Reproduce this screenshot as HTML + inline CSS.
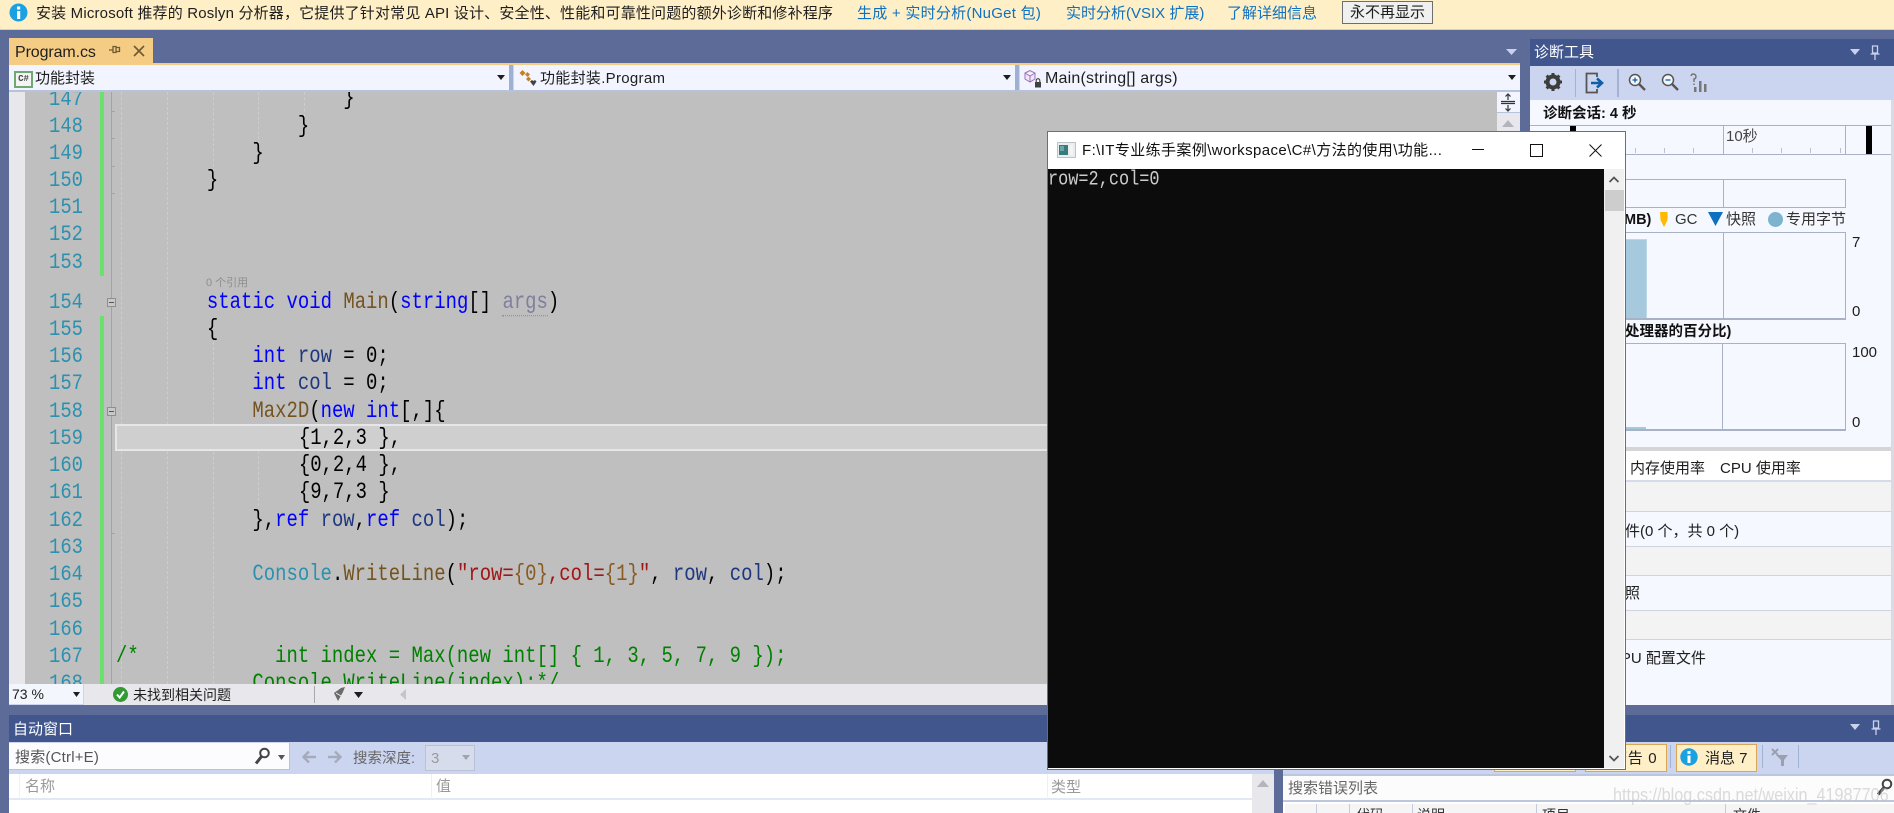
<!DOCTYPE html>
<html lang="zh">
<head>
<meta charset="utf-8">
<title>Visual Studio</title>
<style>
html,body{margin:0;padding:0;width:1894px;height:813px;overflow:hidden;background:#5d6b99}
body{position:relative;font-family:"Liberation Sans","Noto Sans CJK SC",sans-serif;font-size:15px;color:#1e1e1e}
.a{position:absolute;white-space:nowrap}
.t{position:absolute;white-space:nowrap;line-height:20px}
.code{position:absolute;white-space:pre;font-family:"Liberation Mono",monospace;font-size:18.94px;line-height:27.2px;height:27.2px;left:116px;color:#000;transform:scaleY(1.2);transform-origin:0 50%}
.n{position:absolute;left:40px;width:43px;text-align:right;font-family:"Liberation Mono",monospace;font-size:18.87px;line-height:27.2px;color:#2b91af;transform:scaleY(1.2)}
.k{color:#0000ff}.m{color:#74531f}.c{color:#2b91af}.v{color:#1f377f}.s{color:#a31515}.g{color:#008000}.f{color:#8a5a20}
.u{color:#7f7f9f;border-bottom:1px dotted #8f8fa8}
.guide{position:absolute;width:0;border-left:1px dashed #cdcdcd}
.b{position:absolute}
.lk{color:#0e70c0}
.tick{position:absolute;width:1px;height:5px;background:#b8c0cf;top:148px}
</style>
</head>
<body>

<!-- top info bar -->
<div class="b" style="left:0;top:0;width:1894px;height:29px;background:#ffefc6"></div>
<div class="b" style="left:0;top:29px;width:1894px;height:1px;background:#c8d2ea"></div>
<svg class="b" style="left:9px;top:3px" width="19" height="19" viewBox="0 0 19 19"><circle cx="9.5" cy="9.5" r="9" fill="#1ba1e2"/><rect x="8" y="8" width="3.2" height="8" fill="#fff"/><rect x="8" y="3.5" width="3.2" height="3" fill="#fff"/></svg>
<div class="t" style="left:36px;top:4px;font-size:15px;letter-spacing:.17px">安装 Microsoft 推荐的 Roslyn 分析器，它提供了针对常见 API 设计、安全性、性能和可靠性问题的额外诊断和修补程序</div>
<div class="t lk" style="left:857px;top:4px;letter-spacing:.25px">生成 + 实时分析(NuGet 包)</div>
<div class="t lk" style="left:1066px;top:4px">实时分析(VSIX 扩展)</div>
<div class="t lk" style="left:1227px;top:4px">了解详细信息</div>
<div class="b" style="left:1342px;top:1px;width:89px;height:21px;border:1px solid #6e6e6e;background:#f0f0f0;text-align:center;line-height:21px;font-size:15px">永不再显示</div>

<!-- tab -->
<div class="b" style="left:9px;top:38px;width:144px;height:26px;background:#f5cc84"></div>
<div class="t" style="left:15px;top:43px;font-size:16px;letter-spacing:-.1px">Program.cs</div>
<svg class="b" style="left:109px;top:44px" width="12" height="12" viewBox="0 0 12 12"><path d="M0 6H4M4 2.5H7V8.5H4ZM7 3.500H10.500V7.500H7" fill="none" stroke="#6d5a33" stroke-width="1.3"/></svg>
<svg class="b" style="left:133px;top:45px" width="12" height="12" viewBox="0 0 12 12"><path d="M1 1L11 11M11 1L1 11" stroke="#6d5a33" stroke-width="1.6"/></svg>
<div class="b" style="left:9px;top:63px;width:1511px;height:2px;background:#f5cc84"></div>
<svg class="b" style="left:1506px;top:49px" width="12" height="7"><path d="M0 0H11L5.500 6Z" fill="#c9d2ea"/></svg>

<!-- nav bar -->
<div class="b" style="left:9px;top:65px;width:1511px;height:27px;background:#ccd5f0"></div>
<div class="b" style="left:9px;top:65px;width:500px;height:25px;background:#f2f5ff"></div>
<div class="b" style="left:514px;top:65px;width:501px;height:25px;background:#f2f5ff"></div>
<div class="b" style="left:1020px;top:65px;width:500px;height:25px;background:#f2f5ff"></div>
<div class="b" style="left:9px;top:90px;width:1511px;height:2px;background:#b6c2de"></div>
<div class="b" style="left:509px;top:65px;width:4px;height:25px;background:#9fb0d5"></div>
<div class="b" style="left:1015px;top:65px;width:4px;height:25px;background:#9fb0d5"></div>
<div class="b" style="left:14px;top:71px;width:15px;height:13px;border:2px solid #6fa870;background:#f4f4f4;font:bold 9px/13px 'Liberation Mono',monospace;text-align:center;color:#444">C#</div>
<div class="t" style="left:35px;top:69px">功能封装</div>
<svg class="b" style="left:497px;top:75px" width="8" height="5"><path d="M0 0H8L4 5Z" fill="#1e1e1e"/></svg>
<svg class="b" style="left:519px;top:69px" width="18" height="19" viewBox="0 0 18 19"><path d="M0.500 4L3.500 1L6.500 4L3.500 7ZM6 5.500L8.500 3L11 5.500L8.500 8ZM4 7L5.500 5.500M7 10L9.500 7.500L12 10L9.500 12.500Z" fill="#c8801e"/><path d="M11 12.500L13 11L14.500 12L16 11L17.500 12.500L14.500 17Z" fill="#424242"/></svg>
<div class="t" style="left:540px;top:69px;letter-spacing:.3px">功能封装.Program</div>
<svg class="b" style="left:1003px;top:75px" width="8" height="5"><path d="M0 0H8L4 5Z" fill="#1e1e1e"/></svg>
<svg class="b" style="left:1024px;top:69px" width="18" height="20" viewBox="0 0 18 20"><path d="M1 4L6 1.500L11 4V10L6 13L1 10ZM1 4L6 7L11 4M6 7V13" fill="#efe6f6" stroke="#9a72b8" stroke-width="1"/><rect x="11" y="13" width="6" height="5.500" fill="#424242"/><path d="M12.200 13V11.500A1.800 1.800 0 0 1 15.800 11.500V13" fill="none" stroke="#424242" stroke-width="1.100"/></svg>
<div class="t" style="left:1045px;top:69px;font-size:16px;letter-spacing:.2px">Main(string[] args)</div>
<svg class="b" style="left:1508px;top:75px" width="8" height="5"><path d="M0 0H8L4 5Z" fill="#1e1e1e"/></svg>

<!-- editor -->
<div class="b" style="left:9px;top:92px;width:16px;height:592px;background:#e8e8ec"></div>
<div class="b" style="left:25px;top:92px;width:1472px;height:592px;background:#bfbfbf;overflow:hidden" id="ed"></div>
<div class="b" style="left:100px;top:92px;width:4px;height:184px;background:#6ce06c"></div>
<div class="b" style="left:100px;top:316px;width:4px;height:368px;background:#6ce06c"></div>
<div class="b" style="left:111px;top:92px;width:1px;height:592px;background:#a3a3a3"></div>
<div class="b" style="left:111px;top:111px;width:4px;height:1px;background:#a3a3a3"></div>
<div class="b" style="left:111px;top:138px;width:4px;height:1px;background:#a3a3a3"></div>
<div class="b" style="left:111px;top:166px;width:4px;height:1px;background:#a3a3a3"></div>
<div class="b" style="left:111px;top:193px;width:4px;height:1px;background:#a3a3a3"></div>
<div class="b" style="left:111px;top:533px;width:4px;height:1px;background:#a3a3a3"></div>
<div class="guide" style="left:121px;top:92px;height:592px"></div>
<div class="guide" style="left:167px;top:92px;height:592px"></div>
<div class="guide" style="left:213px;top:92px;height:80px"></div>
<div class="guide" style="left:213px;top:342px;height:342px"></div>
<div class="guide" style="left:258px;top:92px;height:52px"></div>
<div class="guide" style="left:258px;top:451px;height:55px"></div>
<div class="guide" style="left:304px;top:92px;height:25px"></div>
<div class="b" style="left:107px;top:298px;width:7px;height:7px;border:1px solid #8e8e8e;background:#c8c8c8"></div>
<div class="b" style="left:107px;top:407px;width:7px;height:7px;border:1px solid #8e8e8e;background:#c8c8c8"></div>
<div class="b" style="left:109px;top:302px;width:5px;height:1px;background:#555"></div>
<div class="b" style="left:109px;top:411px;width:5px;height:1px;background:#555"></div>
<div class="b" style="left:115px;top:424px;width:1382px;height:23px;background:#cfcfcf;border:2px solid #e6e6ea"></div>

<div style="position:absolute;left:0;top:92px;width:1894px;height:592px;overflow:hidden">
<div style="position:absolute;left:0;top:-92px;width:1894px;height:776px">
<div class="n" style="top:86.4px">147</div>
<div class="n" style="top:112.6px">148</div>
<div class="n" style="top:139.8px">149</div>
<div class="n" style="top:167px">150</div>
<div class="n" style="top:194.200px">151</div>
<div class="n" style="top:221.400px">152</div>
<div class="n" style="top:248.600px">153</div>
<div class="n" style="top:288.700px">154</div>
<div class="n" style="top:315.900px">155</div>
<div class="n" style="top:343.200px">156</div>
<div class="n" style="top:370.400px">157</div>
<div class="n" style="top:397.700px">158</div>
<div class="n" style="top:424.900px">159</div>
<div class="n" style="top:452.200px">160</div>
<div class="n" style="top:479.400px">161</div>
<div class="n" style="top:506.700px">162</div>
<div class="n" style="top:533.900px">163</div>
<div class="n" style="top:561.200px">164</div>
<div class="n" style="top:588.400px">165</div>
<div class="n" style="top:615.700px">166</div>
<div class="n" style="top:642.900px">167</div>
<div class="n" style="top:670.200px">168</div>

<div class="code" style="top:85.4px">                    }</div>
<div class="code" style="top:112.6px">                }</div>
<div class="code" style="top:139.8px">            }</div>
<div class="code" style="top:167px">        }</div>
<div class="a" style="left:206px;top:275px;font-size:11px;line-height:16px;color:#8e8e8e">0 个引用</div>
<div class="code" style="top:288.700px">        <span class="k">static</span> <span class="k">void</span> <span class="m">Main</span>(<span class="k">string</span>[] <span class="u">args</span>)</div>
<div class="code" style="top:315.900px">        {</div>
<div class="code" style="top:343.200px">            <span class="k">int</span> <span class="v">row</span> = 0;</div>
<div class="code" style="top:370.400px">            <span class="k">int</span> <span class="v">col</span> = 0;</div>
<div class="code" style="top:397.700px">            <span class="m">Max2D</span>(<span class="k">new</span> <span class="k">int</span>[,]{</div>
<div class="code" style="top:424.900px;left:117px">                {1,2,3 },</div>
<div class="code" style="top:452.200px;left:117px">                {0,2,4 },</div>
<div class="code" style="top:479.400px;left:117px">                {9,7,3 }</div>
<div class="code" style="top:506.700px">            },<span class="k">ref</span> <span class="v">row</span>,<span class="k">ref</span> <span class="v">col</span>);</div>
<div class="code" style="top:561.200px">            <span class="c">Console</span>.<span class="m">WriteLine</span>(<span class="s">"row=</span><span class="f">{0}</span><span class="s">,col=</span><span class="f">{1}</span><span class="s">"</span>, <span class="v">row</span>, <span class="v">col</span>);</div>
<div class="code g" style="top:642.900px">/*            int index = Max(new int[] { 1, 3, 5, 7, 9 });</div>
<div class="code g" style="top:670.200px">            Console.WriteLine(index);*/</div>
</div>
</div>

<!-- editor scrollbar -->
<div class="b" style="left:1497px;top:92px;width:23px;height:592px;background:#e8e8ec"></div>
<div class="b" style="left:1497px;top:92px;width:23px;height:20px;background:#f2f5ff;border-bottom:1px solid #b6c2de"></div>
<svg class="b" style="left:1500px;top:93px" width="16" height="19" viewBox="0 0 16 19"><path d="M1 8.500H15M1 10.500H15M8 1V7M8 12V18M5.500 3.500L8 1L10.500 3.500M5.500 15.500L8 18L10.500 15.500" fill="none" stroke="#333" stroke-width="1.200"/></svg>
<svg class="b" style="left:1502px;top:120px" width="12" height="7"><path d="M0 7L6 0L12 7Z" fill="#b4b4bc"/></svg>

<!-- status bar under editor -->
<div class="b" style="left:9px;top:684px;width:1511px;height:21px;background:#e8e8ec"></div>
<div class="b" style="left:9px;top:684px;width:74px;height:20px;background:#f4f6fd;border-right:1px solid #ccd5f0;border-bottom:1px solid #ccd5f0"></div>
<div class="t" style="left:12px;top:684px;font-size:14px">73 %</div>
<svg class="b" style="left:73px;top:692px" width="7" height="5"><path d="M0 0H7L3.500 5Z" fill="#1e1e1e"/></svg>
<svg class="b" style="left:113px;top:687px" width="15" height="15" viewBox="0 0 15 15"><circle cx="7.500" cy="7.500" r="7.500" fill="#339933"/><path d="M4 7.500L6.700 10.500L11 4.500" fill="none" stroke="#fff" stroke-width="2"/></svg>
<div class="t" style="left:133px;top:685px;font-size:14px">未找到相关问题</div>
<div class="b" style="left:314px;top:686px;width:1px;height:17px;background:#a8a8ae"></div>
<svg class="b" style="left:333px;top:686px" width="13" height="17" viewBox="0 0 13 17"><path d="M1 7L8 2L12 1L10 6L5 15Z" fill="#6a6a6a"/><path d="M3 7L8 10" stroke="#eee"/></svg>
<svg class="b" style="left:354px;top:692px" width="9" height="6"><path d="M0 0H9L4.500 6Z" fill="#1e1e1e"/></svg>
<svg class="b" style="left:400px;top:689px" width="6" height="11"><path d="M6 0V11L0 5.500Z" fill="#c4c4ca"/></svg>

<!-- autos panel -->
<div class="b" style="left:9px;top:715px;width:1265px;height:27px;background:#40568d"></div>
<div class="t" style="left:13px;top:720px;color:#fff">自动窗口</div>
<div class="b" style="left:9px;top:742px;width:1265px;height:32px;background:#ccd5f0"></div>
<div class="b" style="left:9px;top:743px;width:280px;height:26px;background:#fcfcff;border-right:1px solid #b8c2dc;border-bottom:1px solid #b8c2dc"></div>
<div class="t" style="left:15px;top:748px;font-size:15px;color:#555;letter-spacing:.2px">搜索(Ctrl+E)</div>
<svg class="b" style="left:254px;top:747px" width="17" height="19" viewBox="0 0 17 19"><circle cx="10.500" cy="6" r="4.300" fill="none" stroke="#444" stroke-width="2"/><path d="M7.500 9.500L2 16.500" stroke="#444" stroke-width="3"/></svg>
<svg class="b" style="left:278px;top:755px" width="7" height="5"><path d="M0 0H7L3.500 5Z" fill="#555"/></svg>
<svg class="b" style="left:302px;top:750px" width="15" height="14" viewBox="0 0 15 14"><path d="M14 7H2M7 1.500L1.500 7L7 12.500" fill="none" stroke="#a4abbd" stroke-width="2.400"/></svg>
<svg class="b" style="left:327px;top:750px" width="15" height="14" viewBox="0 0 15 14"><path d="M1 7H13M8 1.500L13.500 7L8 12.500" fill="none" stroke="#a4abbd" stroke-width="2.400"/></svg>
<div class="t" style="left:353px;top:749px;font-size:14.500px;color:#666">搜索深度:</div>
<div class="b" style="left:425px;top:745px;width:48px;height:24px;background:#d6dcec;border:1px solid #b9c1d6"></div>
<div class="t" style="left:431px;top:749px;color:#9a9a9a;font-size:15px">3</div>
<svg class="b" style="left:462px;top:755px" width="8" height="5"><path d="M0 0H8L4 5Z" fill="#a0a4b0"/></svg>
<div class="b" style="left:9px;top:774px;width:1265px;height:39px;background:#fff"></div>
<div class="b" style="left:9px;top:798px;width:1243px;height:2px;background:#e4e8f4"></div>
<div class="b" style="left:19px;top:774px;width:1px;height:25px;background:#eef0f8"></div>
<div class="b" style="left:431px;top:774px;width:1px;height:25px;background:#eef0f8"></div>
<div class="b" style="left:1047px;top:774px;width:1px;height:25px;background:#eef0f8"></div>
<div class="t" style="left:25px;top:777px;font-size:15px;color:#9a9a9a">名称</div>
<div class="t" style="left:436px;top:777px;font-size:15px;color:#9a9a9a">值</div>
<div class="t" style="left:1051px;top:778px;font-size:15px;color:#9a9a9a">类型</div>
<div class="b" style="left:1252px;top:774px;width:22px;height:39px;background:#e8e8ec"></div>
<svg class="b" style="left:1257px;top:780px" width="12" height="7"><path d="M0 7L6 0L12 7Z" fill="#b4b4bc"/></svg>

<!-- right diagnostics panel -->
<div class="b" style="left:1530px;top:39px;width:364px;height:27px;background:#40568d"></div>
<div class="t" style="left:1534px;top:43px;color:#fff">诊断工具</div>
<svg class="b" style="left:1850px;top:49px" width="11" height="7"><path d="M0 0H10L5 6Z" fill="#c9d2ea"/></svg>
<svg class="b" style="left:1870px;top:45px" width="10" height="16" viewBox="0 0 10 16"><path d="M2.500 1H7.500V8H2.500ZM0.500 9H9.500M5 9V15" fill="none" stroke="#c9d2ea" stroke-width="1.300"/></svg>
<div class="b" style="left:1530px;top:66px;width:364px;height:34px;background:#ccd5f0"></div>
<svg class="b" style="left:1543px;top:72px" width="20" height="20" viewBox="0 0 20 20"><circle cx="10" cy="10" r="5.500" fill="none" stroke="#3c3c3c" stroke-width="4"/><path d="M10 1V4M10 16V19M1 10H4M16 10H19M3.600 3.600L5.800 5.800M14.200 14.200L16.400 16.400M16.400 3.600L14.200 5.800M5.800 14.200L3.600 16.400" stroke="#3c3c3c" stroke-width="3"/></svg>
<div class="b" style="left:1575px;top:69px;width:1px;height:28px;background:#a3b2d2"></div>
<svg class="b" style="left:1585px;top:72px" width="20" height="22" viewBox="0 0 20 22"><path d="M12 5V1.500H1.500V20.500H12V17" fill="none" stroke="#555" stroke-width="1.800"/><path d="M6 11H16M12 6.500L17 11L12 15.500" fill="none" stroke="#0e5ea8" stroke-width="2.600"/></svg>
<div class="b" style="left:1617px;top:69px;width:2px;height:28px;background:#a3b2d2"></div>
<svg class="b" style="left:1628px;top:73px" width="18" height="18" viewBox="0 0 18 18"><circle cx="7" cy="7" r="5.500" fill="#f4f6fc" stroke="#555" stroke-width="1.500"/><path d="M11 11L17 17" stroke="#555" stroke-width="2.400"/><path d="M4.500 7H9.500M7 4.500V9.500" stroke="#0e5ea8" stroke-width="1.300"/></svg>
<svg class="b" style="left:1661px;top:73px" width="18" height="18" viewBox="0 0 18 18"><circle cx="7" cy="7" r="5.500" fill="#f4f6fc" stroke="#555" stroke-width="1.500"/><path d="M11 11L17 17" stroke="#555" stroke-width="2.400"/><path d="M4.500 7H9.500" stroke="#0e5ea8" stroke-width="1.300"/></svg>
<svg class="b" style="left:1690px;top:72px" width="19" height="20" viewBox="0 0 19 20"><path d="M1 4A2.500 2.500 0 1 1 4 7V10M4 11.500V13" fill="none" stroke="#777" stroke-width="1.500"/><path d="M4 20V15H6.500V20ZM9 20V9H11.500V20ZM14 20V12H16.500V20Z" fill="#777"/></svg>
<div class="b" style="left:1530px;top:100px;width:361px;height:605px;background:#f6f8ff"></div>
<div class="b" style="left:1891px;top:100px;width:3px;height:605px;background:#d8dbe4"></div>
<div class="t" style="left:1543px;top:104px;font-size:14.500px;font-weight:bold;color:#111">诊断会话: 4 秒</div>
<div class="b" style="left:1530px;top:125px;width:361px;height:1px;background:#a9b2c4"></div>
<div class="b" style="left:1530px;top:154px;width:361px;height:1px;background:#a9b2c4"></div>
<div class="b" style="left:1570px;top:126px;width:6px;height:7px;background:#000"></div>
<div class="b" style="left:1866px;top:126px;width:6px;height:28px;background:#000"></div>
<div class="b" style="left:1723px;top:126px;width:1px;height:28px;background:#a9b2c4"></div>
<div class="b" style="left:1845px;top:126px;width:1px;height:28px;background:#a9b2c4"></div>
<div class="tick" style="left:1635px"></div><div class="tick" style="left:1664px"></div><div class="tick" style="left:1693px"></div><div class="tick" style="left:1752px"></div><div class="tick" style="left:1781px"></div><div class="tick" style="left:1810px"></div><div class="tick" style="left:1840px"></div>
<div class="t" style="left:1726px;top:127px;font-size:15px;color:#444">10秒</div>

<div class="b" style="left:1530px;top:179px;width:315px;height:27px;border:1px solid #a9b2c4;border-width:1px 1px 1px 0"></div>
<div class="b" style="left:1723px;top:179px;width:1px;height:28px;background:#a9b2c4"></div>
<div class="t" style="left:1624px;top:210px;font-weight:bold;font-size:14.500px;color:#111">MB)</div>
<svg class="b" style="left:1660px;top:212px" width="8" height="16"><path d="M0 0H7.500V8L4 15L0.500 8Z" fill="#ffb900"/></svg>
<div class="t" style="left:1675px;top:210px;color:#333">GC</div>
<svg class="b" style="left:1708px;top:212px" width="15" height="15"><path d="M0 0H15L7.500 14Z" fill="#0e70c0"/></svg>
<div class="t" style="left:1726px;top:210px;color:#333">快照</div>
<div class="b" style="left:1768px;top:212px;width:15px;height:15px;border-radius:50%;background:#7db3cf"></div>
<div class="t" style="left:1786px;top:210px;color:#333">专用字节</div>
<div class="b" style="left:1530px;top:232px;width:315px;height:85px;border:1px solid #a9b2c4;border-width:1px 1px 2px 0"></div>
<div class="b" style="left:1723px;top:232px;width:1px;height:86px;background:#a9b2c4"></div>
<div class="b" style="left:1625px;top:239px;width:21px;height:78px;background:#a6c9dd;border-top:1px solid #bcd7e6;border-right:1px solid #bcd7e6"></div>
<div class="t" style="left:1852px;top:233px;font-size:15px">7</div>
<div class="t" style="left:1852px;top:302px;font-size:15px">0</div>
<div class="t" style="left:1625px;top:322px;font-weight:bold;font-size:14.500px;color:#111">处理器的百分比)</div>
<div class="b" style="left:1530px;top:343px;width:315px;height:85px;border:1px solid #a9b2c4;border-width:1px 1px 2px 0"></div>
<div class="b" style="left:1722px;top:343px;width:1px;height:87px;background:#a9b2c4"></div>
<div class="b" style="left:1625px;top:427px;width:21px;height:2px;background:#a6c9dd"></div>
<div class="t" style="left:1852px;top:343px;font-size:15px">100</div>
<div class="t" style="left:1852px;top:413px;font-size:15px">0</div>
<div class="b" style="left:1530px;top:447px;width:361px;height:4px;background:#d5d5d8"></div>
<div class="b" style="left:1530px;top:451px;width:361px;height:29px;background:#fff"></div>
<div class="t" style="left:1630px;top:459px;font-size:15px">内存使用率</div>
<div class="t" style="left:1720px;top:459px;font-size:15px">CPU 使用率</div>
<div class="b" style="left:1530px;top:480px;width:361px;height:2px;background:#d6dbea"></div>
<div class="b" style="left:1530px;top:482px;width:361px;height:29px;background:#f3f3f4"></div>
<div class="b" style="left:1530px;top:511px;width:361px;height:1px;background:#cfd3e0"></div>
<div class="t" style="left:1625px;top:522px;font-size:15px">件(0 个，共 0 个)</div>
<div class="b" style="left:1530px;top:546px;width:361px;height:1px;background:#cfd3e0"></div>
<div class="b" style="left:1530px;top:547px;width:361px;height:28px;background:#f3f3f4"></div>
<div class="b" style="left:1530px;top:575px;width:361px;height:1px;background:#cfd3e0"></div>
<div class="t" style="left:1625px;top:584px;font-size:15px">照</div>
<div class="b" style="left:1530px;top:610px;width:361px;height:1px;background:#cfd3e0"></div>
<div class="b" style="left:1530px;top:611px;width:361px;height:28px;background:#f3f3f4"></div>
<div class="b" style="left:1530px;top:639px;width:361px;height:1px;background:#cfd3e0"></div>
<div class="t" style="left:1610px;top:649px;font-size:15px">CPU 配置文件</div>

<!-- error list -->
<div class="b" style="left:1283px;top:715px;width:611px;height:27px;background:#40568d"></div>
<svg class="b" style="left:1850px;top:724px" width="11" height="7"><path d="M0 0H10L5 6Z" fill="#c9d2ea"/></svg>
<svg class="b" style="left:1871px;top:720px" width="10" height="16" viewBox="0 0 10 16"><path d="M2.500 1H7.500V8H2.500ZM0.500 9H9.500M5 9V15" fill="none" stroke="#c9d2ea" stroke-width="1.300"/></svg>
<div class="b" style="left:1283px;top:742px;width:611px;height:32px;background:#ccd5f0"></div>
<div class="b" style="left:1494px;top:744px;width:80px;height:26px;background:#ffefc6;border:1px solid #d8a656"></div>
<div class="b" style="left:1585px;top:744px;width:80px;height:26px;background:#ffefc6;border:1px solid #d8a656"></div>
<div class="t" style="left:1612px;top:749px;font-size:15px;letter-spacing:.7px">警告 0</div>
<div class="b" style="left:1670px;top:745px;width:1px;height:23px;background:#a3b2d2"></div>
<div class="b" style="left:1676px;top:744px;width:79px;height:26px;background:#ffefc6;border:1px solid #d8a656"></div>
<svg class="b" style="left:1680px;top:748px" width="18" height="18" viewBox="0 0 18 18"><circle cx="9" cy="9" r="8.700" fill="#1ba1e2"/><rect x="7.500" y="7.500" width="3" height="7.500" fill="#fff"/><rect x="7.500" y="3" width="3" height="3" fill="#fff"/></svg>
<div class="t" style="left:1705px;top:749px;font-size:15px">消息 7</div>
<div class="b" style="left:1762px;top:745px;width:1px;height:23px;background:#a3b2d2"></div>
<svg class="b" style="left:1771px;top:748px" width="18" height="18" viewBox="0 0 18 18"><path d="M1 1L7 7M7 1L1 7" stroke="#9aa0ae" stroke-width="2"/><path d="M5 7H17L13 12V18H10V12Z" fill="#9aa0ae"/></svg>
<div class="b" style="left:1798px;top:745px;width:1px;height:23px;background:#a3b2d2"></div>
<div class="b" style="left:1283px;top:774px;width:611px;height:2px;background:#bcc6de"></div>
<div class="b" style="left:1283px;top:776px;width:611px;height:24px;background:#fcfcfd"></div>
<div class="b" style="left:1283px;top:800px;width:611px;height:2px;background:#bcc6de"></div>
<div class="t" style="left:1288px;top:779px;font-size:15px;color:#666">搜索错误列表</div>
<svg class="b" style="left:1876px;top:778px" width="18" height="19" viewBox="0 0 18 19"><circle cx="11" cy="6" r="4.300" fill="none" stroke="#444" stroke-width="2"/><path d="M8 9.500L2 16.500" stroke="#444" stroke-width="3"/></svg>
<div class="b" style="left:1283px;top:802px;width:611px;height:11px;background:#fff"></div>
<div class="b" style="left:1285px;top:804px;width:609px;height:9px;background:#f5f5f5"></div>
<div class="b" style="left:1316px;top:804px;width:1px;height:9px;background:#c4cad8"></div>
<div class="b" style="left:1349px;top:804px;width:1px;height:9px;background:#c4cad8"></div>
<div class="b" style="left:1412px;top:804px;width:1px;height:9px;background:#c4cad8"></div>
<div class="b" style="left:1536px;top:804px;width:1px;height:9px;background:#c4cad8"></div>
<div class="b" style="left:1725px;top:804px;width:1px;height:9px;background:#c4cad8"></div>
<div style="position:absolute;left:1283px;top:804px;width:611px;height:9px;overflow:hidden;font-size:14px;line-height:20px;color:#333">
<span class="a" style="left:73px;top:1px">代码</span><span class="a" style="left:134px;top:1px">说明</span><span class="a" style="left:259px;top:1px">项目</span><span class="a" style="left:450px;top:1px">文件</span>
</div>
<div class="a" style="left:1613px;top:783px;font-size:18px;line-height:24px;color:rgba(190,190,190,.55);transform:scaleX(.9);transform-origin:0 50%">https://blog.csdn.net/weixin_41987706</div>

<!-- console window -->
<div class="b" style="left:1047px;top:131px;width:577px;height:637px;background:#fff;border:1px solid #6e6e6e"></div>
<div class="b" style="left:1048px;top:169px;width:556px;height:599px;background:#0c0c0c"></div>
<div class="b" style="left:1604px;top:169px;width:20px;height:599px;background:#f0f0f0"></div>
<div class="b" style="left:1605px;top:190px;width:19px;height:21px;background:#cdcdcd"></div>
<svg class="b" style="left:1609px;top:176px" width="10" height="7"><path d="M0.500 6L5 1.500L9.500 6" fill="none" stroke="#555" stroke-width="1.800"/></svg>
<svg class="b" style="left:1609px;top:755px" width="10" height="7"><path d="M0.500 1L5 5.500L9.500 1" fill="none" stroke="#555" stroke-width="1.800"/></svg>
<svg class="b" style="left:1057px;top:142px" width="19" height="16" viewBox="0 0 19 16"><rect x="0.500" y="0.500" width="18" height="15" fill="#e8eef0" stroke="#bcc4c8"/><rect x="2" y="3" width="9" height="10" fill="#3a7a7a"/><rect x="3" y="4" width="4" height="5" fill="#6aa6a8"/><rect x="13" y="3" width="3" height="10" fill="#f4f4f4"/></svg>
<div class="t" style="left:1082px;top:141px;font-size:15px;color:#111;letter-spacing:.4px">F:\IT专业练手案例\workspace\C#\方法的使用\功能...</div>
<div class="b" style="left:1472px;top:149px;width:12px;height:1px;background:#111"></div>
<div class="b" style="left:1530px;top:144px;width:11px;height:11px;border:1px solid #111"></div>
<svg class="b" style="left:1589px;top:144px" width="13" height="13"><path d="M0.500 0.500L12.500 12.500M12.500 0.500L0.500 12.500" stroke="#111" stroke-width="1"/></svg>
<div class="a" style="left:1048px;top:171px;font-family:'Liberation Mono',monospace;font-size:16.900px;line-height:20px;color:#cccccc;transform:scaleY(1.200);transform-origin:0 50%">row=2,col=0</div>

</body>
</html>
